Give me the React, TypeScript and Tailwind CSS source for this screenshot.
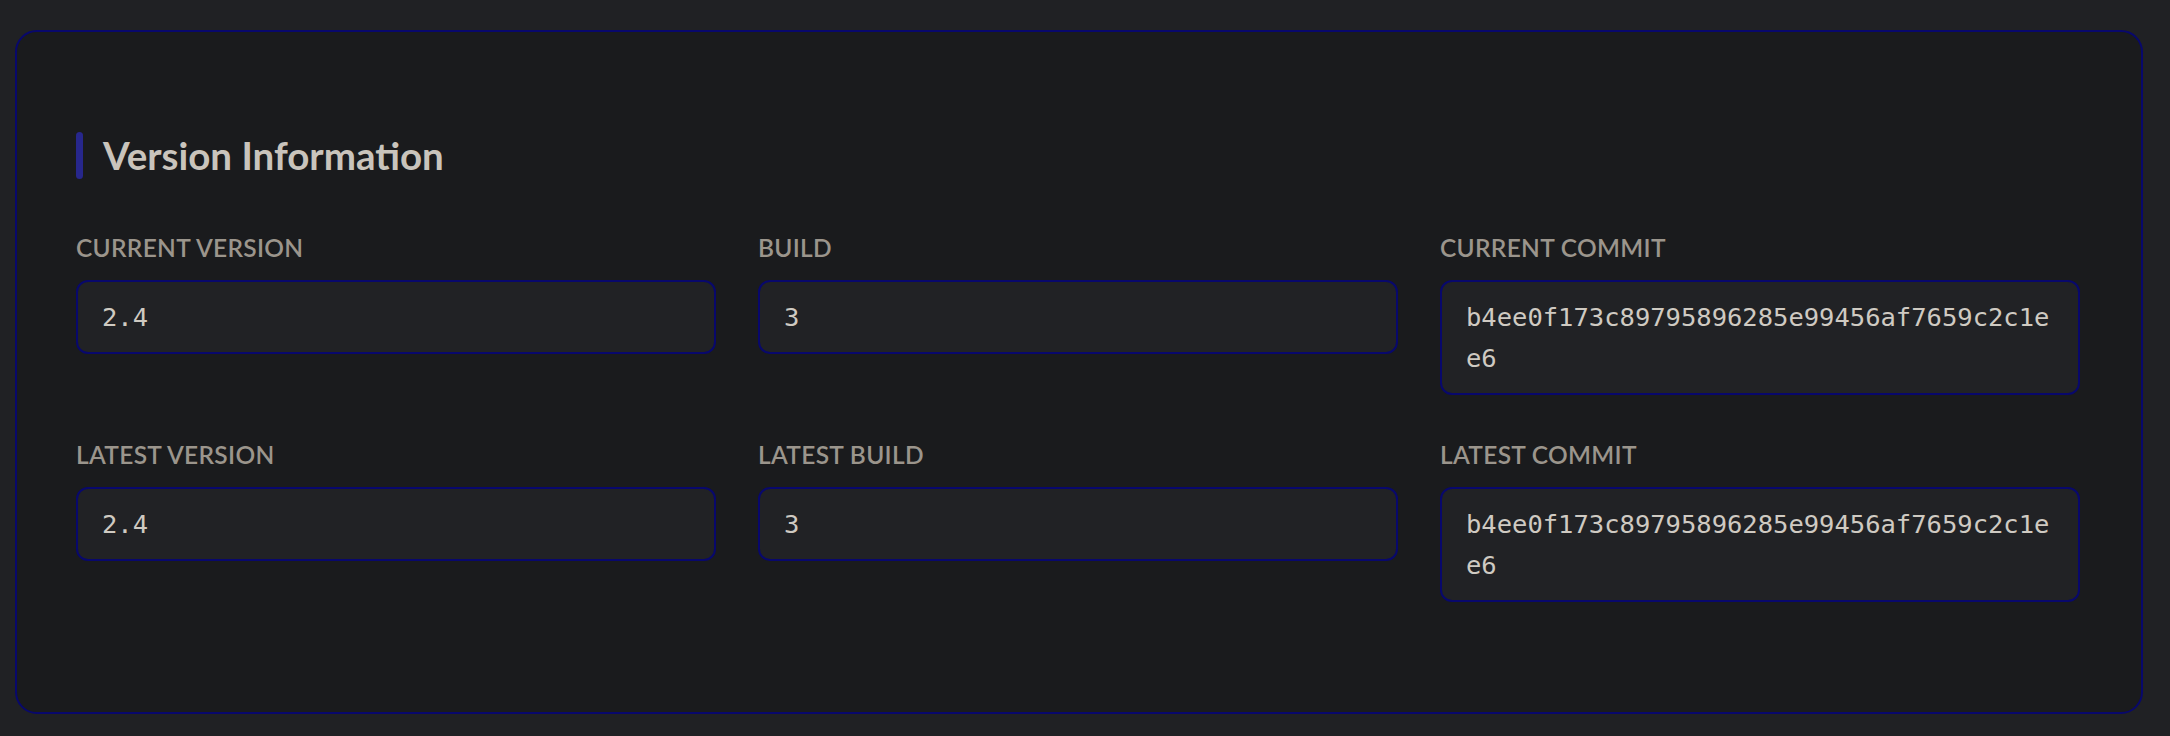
const fields = [
  { label: "Current Version", value: "2.4" },
  { label: "Build", value: "3" },
  { label: "Current Commit", value: "b4ee0f173c89795896285e99456af7659c2c1ee6" },
  { label: "Latest Version", value: "2.4" },
  { label: "Latest Build", value: "3" },
  { label: "Latest Commit", value: "b4ee0f173c89795896285e99456af7659c2c1ee6" },
]

function Field({ label, value }: { label: string; value: string }) {
  return (
    <div className="flex flex-col">
      <span className="mb-[15px] text-[24.5px] leading-[34px] font-semibold uppercase tracking-[0.3px] text-[#9b958c] font-['Lato',sans-serif]">
        {label}
      </span>
      <div className="rounded-[12px] border-2 border-[#08086c] bg-[#212225] px-6 py-[14.5px] font-['DejaVu_Sans_Mono',monospace] text-[25.5px] leading-[41px] text-[#cfcac2] break-all">
        {value}
      </div>
    </div>
  )
}

export default function App() {
  return (
    <div className="min-h-screen bg-[#202124] pt-[30px] pb-[22px] pl-[15px] pr-[27px]">
      <div className="rounded-[22px] border-2 border-[#08086c] bg-[#1a1b1d] pt-[100px] pb-[110px] pl-[59px] pr-[61px]">
        <div className="flex items-center gap-[20px]">
          <div className="h-[47px] w-[7px] rounded-full bg-[#27278c]" />
          <h2 className="text-[38.5px] leading-[47px] font-bold text-[#c9c4bc] font-['Lato',sans-serif]">
            Version Information
          </h2>
        </div>

        <div className="mt-[52px] grid grid-cols-3 gap-x-[42px] gap-y-[43px] items-start">
          {fields.map((f) => (
            <Field key={f.label} label={f.label} value={f.value} />
          ))}
        </div>
      </div>
    </div>
  )
}
